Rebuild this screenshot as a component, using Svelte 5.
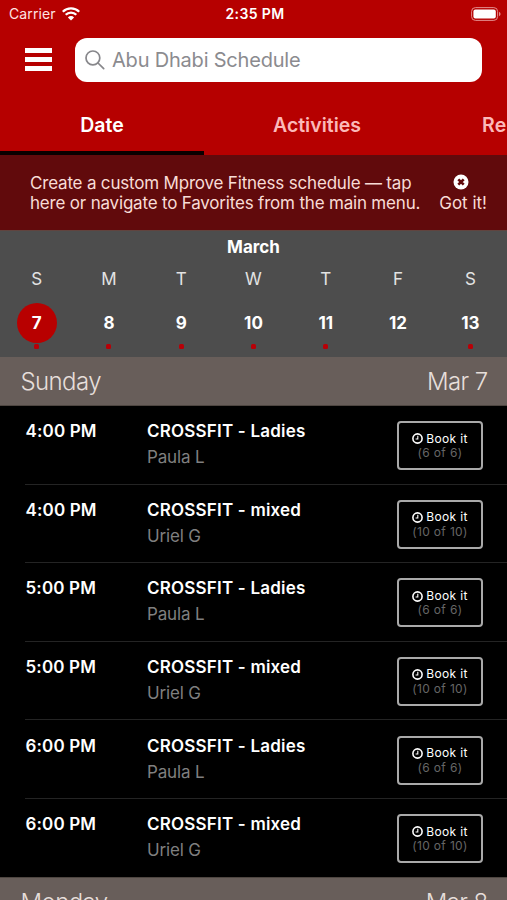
<script>
  const tabs = ["Date", "Activities", "Resources"];
  let activeTab = $state("Date");
  let selected = $state(7);
  let noticeOpen = $state(true);

  const week = [
    { letter: "S", date: 7, hasClasses: true },
    { letter: "M", date: 8, hasClasses: true },
    { letter: "T", date: 9, hasClasses: true },
    { letter: "W", date: 10, hasClasses: true },
    { letter: "T", date: 11, hasClasses: true },
    { letter: "F", date: 12, hasClasses: false },
    { letter: "S", date: 13, hasClasses: true },
  ];

  const classes = [
    { time: "4:00 PM", name: "CROSSFIT - Ladies", coach: "Paula L", spots: "(6 of 6)" },
    { time: "4:00 PM", name: "CROSSFIT - mixed", coach: "Uriel G", spots: "(10 of 10)" },
    { time: "5:00 PM", name: "CROSSFIT - Ladies", coach: "Paula L", spots: "(6 of 6)" },
    { time: "5:00 PM", name: "CROSSFIT - mixed", coach: "Uriel G", spots: "(10 of 10)" },
    { time: "6:00 PM", name: "CROSSFIT - Ladies", coach: "Paula L", spots: "(6 of 6)" },
    { time: "6:00 PM", name: "CROSSFIT - mixed", coach: "Uriel G", spots: "(10 of 10)" },
  ];
</script>

<div class="screen">
  <header>
    <div class="status">
      <div class="carrier">
        <span>Carrier</span>
        <svg width="18" height="14" viewBox="0 0 18 14" aria-hidden="true">
          <g fill="none" stroke="#fff" stroke-width="2.3">
            <path d="M0.8 4.8 A11.7 11.7 0 0 1 17.2 4.8" />
            <path d="M3.7 7.8 A7.5 7.5 0 0 1 14.3 7.8" />
          </g>
          <path d="M9 13.6 L5.9 10.4 A4.4 4.4 0 0 1 12.1 10.4 Z" fill="#fff" />
        </svg>
      </div>
      <span class="clock">2:35 PM</span>
      <svg class="battery" width="30" height="14" viewBox="0 0 30 14" aria-hidden="true">
        <rect x="0.6" y="0.6" width="26" height="12.8" rx="3.8" fill="none" stroke="#e38c8c" />
        <rect x="2.4" y="2.4" width="22.4" height="9.2" rx="2" fill="#fff" />
        <path d="M28 4.7 Q29.6 5.6 29.6 7 Q29.6 8.4 28 9.3 Z" fill="#e38c8c" />
      </svg>
    </div>

    <div class="toolbar">
      <button class="menu" aria-label="Menu">
        <span></span>
        <span></span>
        <span></span>
      </button>
      <label class="search">
        <svg width="20" height="20" viewBox="0 0 20 20" aria-hidden="true">
          <g fill="none" stroke="#87878b" stroke-width="1.7" stroke-linecap="round">
            <circle cx="7.9" cy="7.9" r="6.9" />
            <path d="M13 13 L18.7 18.7" />
          </g>
        </svg>
        <span>Abu Dhabi Schedule</span>
      </label>
    </div>

    <nav>
      {#each tabs as tab}
        <button class="tab" class:active={activeTab === tab} onclick={() => (activeTab = tab)}>
          {tab}
        </button>
      {/each}
    </nav>
  </header>

  {#if noticeOpen}
    <section class="notice">
      <p>Create a custom Mprove Fitness schedule — tap<br />here or navigate to Favorites from the main menu.</p>
      <button class="got-it" onclick={() => (noticeOpen = false)}>
        <svg width="16" height="16" viewBox="0 0 16 16" aria-hidden="true">
          <circle cx="8" cy="8" r="7.5" fill="#fff" />
          <path d="M5.3 5.3 L10.7 10.7 M10.7 5.3 L5.3 10.7" stroke="#610a0c" stroke-width="2.6" />
        </svg>
        <span>Got it!</span>
      </button>
    </section>
  {/if}

  <section class="calendar">
    <h2>March</h2>
    <div class="week">
      {#each week as day}
        <button class="day" class:selected={selected === day.date} onclick={() => (selected = day.date)}>
          <span class="letter">{day.letter}</span>
          <span class="date">{day.date}</span>
          <span class="dot" class:filled={day.hasClasses}></span>
        </button>
      {/each}
    </div>
  </section>

  <div class="day-header">
    <span>Sunday</span>
    <span>Mar 7</span>
  </div>

  <ul>
    {#each classes as item}
      <li>
        <span class="time">{item.time}</span>
        <div class="details">
          <span class="name">{item.name}</span>
          <span class="coach">{item.coach}</span>
        </div>
        <button class="book">
          <span class="book-label">
            <svg width="11" height="11" viewBox="0 0 11 11" aria-hidden="true">
              <circle cx="5.5" cy="5.5" r="4.6" fill="none" stroke="#fff" stroke-width="1.6" />
              <path d="M5.8 2.8 V6 H3.6" fill="none" stroke="#fff" stroke-width="1.1" />
            </svg>
            Book it
          </span>
          <span class="spots">{item.spots}</span>
        </button>
      </li>
    {/each}
  </ul>

  <div class="day-header">
    <span>Monday</span>
    <span>Mar 8</span>
  </div>
</div>

<style>
  :global(body) {
    background: #000;
  }

  .screen {
    height: 900px;
    overflow: hidden;
    background: #000;
    color: #fff;
    font-family: Inter, "Liberation Sans", sans-serif;
  }

  button {
    margin: 0;
    padding: 0;
    border: 0;
    background: none;
    color: inherit;
    font: inherit;
    cursor: pointer;
  }

  header {
    display: flex;
    flex-direction: column;
    height: 155px;
    background: #b60000;
  }

  .status {
    display: grid;
    grid-template-columns: 1fr auto 1fr;
    align-items: center;
    height: 28px;
    padding: 0 6px 0 9px;
    font-size: 14px;
    line-height: 28px;
  }
  .carrier {
    display: flex;
    align-items: center;
    gap: 6px;
    color: #ffe3e3;
    letter-spacing: 0.1px;
  }
  .clock {
    font-weight: 600;
    letter-spacing: 0.4px;
  }
  .battery {
    justify-self: end;
    margin-top: -1px;
  }

  .toolbar {
    display: flex;
    align-items: center;
    gap: 23px;
    padding: 10px 25px 0;
  }
  .menu {
    display: flex;
    flex-direction: column;
    gap: 4px;
    width: 27px;
    margin-top: -1px;
  }
  .menu span {
    height: 5px;
    background: #fff;
  }
  .search {
    display: flex;
    flex: 1;
    align-items: center;
    gap: 7px;
    height: 44px;
    padding: 0 10px;
    border-radius: 12px;
    background: #fff;
    box-sizing: border-box;
    color: #8b8b8f;
    font-size: 20px;
    letter-spacing: -0.2px;
  }

  nav {
    display: flex;
    flex: 1;
    overflow: hidden;
  }
  .tab {
    flex: 0 0 auto;
    box-sizing: border-box;
    width: 204px;
    padding: 17px 0 0;
    border-bottom: 4px solid transparent;
    color: #fbb9b9;
    font-size: 19.5px;
    font-weight: 600;
  }
  .tab:nth-child(2) {
    width: 226px;
  }
  .tab:nth-child(3) {
    padding-left: 52px;
    letter-spacing: 0.4px;
    text-align: left;
  }
  .tab.active {
    border-color: #0a0000;
    color: #fff;
  }

  .notice {
    display: flex;
    justify-content: space-between;
    box-sizing: border-box;
    height: 75px;
    padding: 18px 20px 0 30px;
    background: #610a0c;
    color: #f8dcd6;
    font-size: 17px;
    line-height: 20px;
    white-space: nowrap;
  }
  p {
    margin: 0;
    letter-spacing: -0.19px;
  }
  .got-it {
    display: flex;
    flex-direction: column;
    align-items: center;
    align-self: flex-start;
  }
  .got-it svg {
    margin: 1px 0 3px -5px;
  }

  .calendar {
    box-sizing: border-box;
    height: 127px;
    border-top: 1px solid #60443f;
    background: #4d4d4d;
  }
  h2 {
    margin: 0;
    padding-top: 5px;
    font-size: 17px;
    font-weight: 700;
    line-height: 22px;
    text-align: center;
  }
  .week {
    display: grid;
    grid-template-columns: repeat(7, 1fr);
    padding: 9px 0 0;
    margin: 0 0.5px;
  }
  .day {
    display: flex;
    flex-direction: column;
    align-items: center;
  }
  .letter {
    color: #e3e3e3;
    font-size: 17px;
    line-height: 24px;
  }
  .date {
    width: 40px;
    height: 40px;
    margin-top: 12px;
    border-radius: 50%;
    font-size: 17px;
    font-weight: 700;
    line-height: 40px;
  }
  .selected .date {
    background: #b80000;
  }
  .dot {
    width: 5px;
    height: 5px;
    margin-top: 1px;
    border-radius: 1.5px;
  }
  .dot.filled {
    background: #b80007;
  }

  .day-header {
    display: flex;
    justify-content: space-between;
    box-sizing: border-box;
    height: 49px;
    padding: 0 19.5px 0 20.5px;
    border-bottom: 1px solid #4e4641;
    background: #685e5a;
    color: #e6deda;
    font-size: 24px;
    font-weight: 300;
    line-height: 50px;
    letter-spacing: -0.6px;
  }

  ul {
    margin: 0;
    padding: 0;
    list-style: none;
  }
  li {
    display: flex;
    box-sizing: border-box;
    height: 78.6px;
    margin-left: 25px;
    padding: 15.2px 24px 0 0.5px;
    border-bottom: 1px solid #242424;
  }
  li:last-child {
    margin-left: 0;
    padding-left: 25.5px;
    border-color: #4e4641;
  }
  .time {
    width: 121.5px;
    font-size: 17px;
    font-weight: 600;
    line-height: 20px;
    letter-spacing: 0.15px;
  }
  .details {
    display: flex;
    flex: 1;
    flex-direction: column;
    gap: 6px;
    line-height: 20px;
  }
  .name {
    font-size: 17px;
    font-weight: 600;
    letter-spacing: 0.2px;
  }
  .coach {
    color: #7f7f7f;
    font-size: 17px;
    letter-spacing: -0.15px;
  }
  .book {
    display: flex;
    flex-direction: column;
    align-items: center;
    justify-content: center;
    box-sizing: border-box;
    width: 86px;
    height: 49px;
    padding-top: 1px;
    border: 2px solid #a9a9a9;
    border-radius: 4px;
    font-size: 12px;
    line-height: 14.5px;
    letter-spacing: 0.35px;
  }
  .book-label {
    display: flex;
    align-items: center;
    gap: 3px;
  }
  .spots {
    color: #666;
  }
</style>
